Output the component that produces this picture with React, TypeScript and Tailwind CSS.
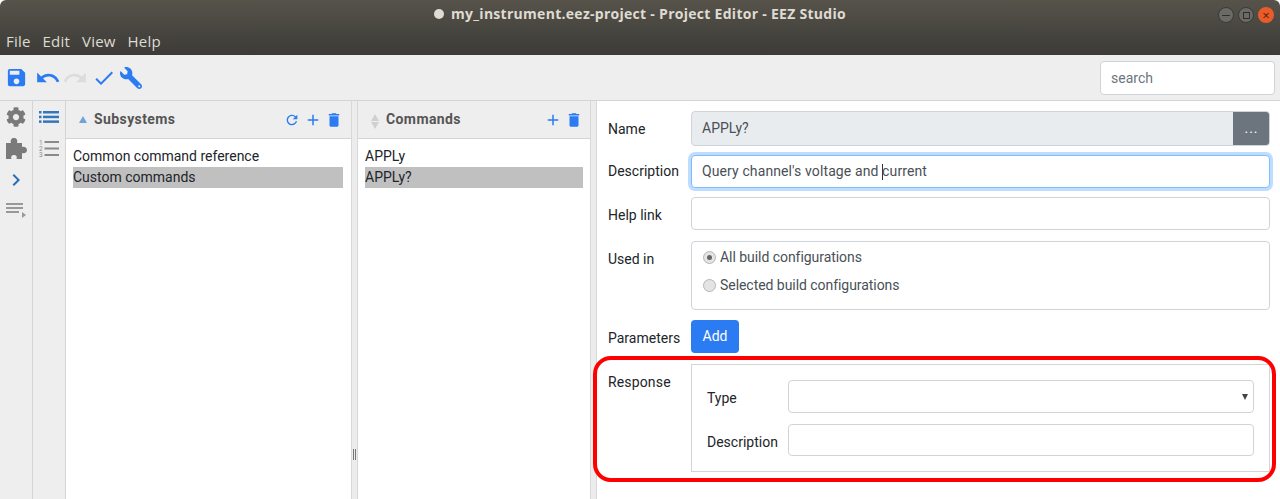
import { FaCog, FaWrench } from 'react-icons/fa';
import { MdSave, MdUndo, MdRedo, MdRefresh, MdAdd, MdDelete, MdCheck, MdChevronRight } from 'react-icons/md';

const ICON_BLUE = 'text-[#2b7bf3]';

function Splitter({ grip = false }: { grip?: boolean }) {
    return (
        <div className="w-[7px] shrink-0 bg-[#ececec] border-x border-[#d8d8d8] flex items-end justify-center pb-[39px]">
            {grip && <div className="w-[3px] h-[11px] border-x border-[#777]" />}
        </div>
    );
}

function PanelHeader({ title, sort, refresh }: { title: string; sort: 'up' | 'none'; refresh?: boolean }) {
    return (
        <div className={`h-[38px] shrink-0 bg-[#eeeeee] border-b border-[#d4d4d4] flex items-center pl-[13px] ${refresh ? 'pr-[8px]' : 'pr-[7px]'}`}>
            {sort === 'up' ? (
                <div className="w-0 h-0 border-x-[4px] border-x-transparent border-b-[7px] border-b-[#6fa4d8] mr-[7px]" />
            ) : (
                <div className="flex flex-col gap-[1px] mr-[7px] mt-[3px]">
                    <div className="w-0 h-0 border-x-[4px] border-x-transparent border-b-[7px] border-b-[#d0d0d0]" />
                    <div className="w-0 h-0 border-x-[4px] border-x-transparent border-t-[7px] border-t-[#d0d0d0]" />
                </div>
            )}
            <span className="text-[14px] font-bold text-[#555] tracking-[0.4px] -mt-[1px]">{title}</span>
            <div className={`ml-auto flex items-center gap-[3px] ${ICON_BLUE}`}>
                {refresh && <MdRefresh size={16} className="mr-[1px]" />}
                <MdAdd size={18} />
                <MdDelete size={18} />
            </div>
        </div>
    );
}

function Row({ text, selected }: { text: string; selected?: boolean }) {
    return (
        <div className={`h-[21px] leading-[21px] text-[14px] text-[#212529] ${selected ? 'bg-[#c0c0c0]' : ''}`}>
            {text}
        </div>
    );
}

function Radio({ checked, label }: { checked?: boolean; label: string }) {
    return (
        <div className="flex items-center h-[28px] text-[14px] tracking-[-0.05px] text-[#495057]">
            <div className="w-[13px] h-[13px] rounded-full border border-[#b5b5b5] bg-[#e4e4e4] flex items-center justify-center ml-[11px] mr-[4px]">
                {checked && <div className="w-[5px] h-[5px] rounded-full bg-[#666]" />}
            </div>
            {label}
        </div>
    );
}

export default function App() {
    return (
        <div className="relative w-[1280px] h-[499px] overflow-hidden bg-white flex flex-col font-['Roboto',sans-serif]">
            {/* Title bar */}
            <div className="h-[55px] shrink-0 bg-gradient-to-b from-[#57534b] to-[#3c3b37] rounded-t-[6px] font-['Open_Sans',sans-serif]">
                <div className="h-[27px] relative flex items-center justify-center">
                    <div className="w-[10px] h-[10px] rounded-full bg-[#dfdbd2] mr-[7px]" />
                    <span className="text-[14px] font-bold tracking-[0.28px] text-[#dfdbd2]">my_instrument.eez-project - Project Editor - EEZ Studio</span>
                    <div className="absolute right-[6px] top-[7px] flex gap-[4px]">
                        <div className="w-[16px] h-[16px] rounded-full bg-[#6a6a66] border border-[#3a3a36] flex items-center justify-center">
                            <div className="w-[8px] h-[1px] bg-[#2e2e2a]" />
                        </div>
                        <div className="w-[16px] h-[16px] rounded-full bg-[#6a6a66] border border-[#3a3a36] flex items-center justify-center">
                            <div className="w-[7px] h-[7px] border border-[#2e2e2a]" />
                        </div>
                        <div className="w-[16px] h-[16px] rounded-full bg-[#e95c2a] flex items-center justify-center text-[#4a2010] text-[13px] leading-none">×</div>
                    </div>
                </div>
                <div className="h-[28px] flex items-center gap-[12px] pl-[6px] text-[15px] tracking-[0.2px] text-[#dfdbd2]">
                    <span>File</span>
                    <span>Edit</span>
                    <span>View</span>
                    <span>Help</span>
                </div>
            </div>

            {/* Toolbar */}
            <div className="h-[46px] shrink-0 bg-[#eeeeee] border-b border-[#d4d4d4] flex items-center pl-[5px] pr-[5px]">
                <MdSave size={23} className={ICON_BLUE} />
                <MdUndo size={26} className={`${ICON_BLUE} ml-[7px]`} />
                <MdRedo size={26} className="text-[#dcdcdc] ml-[1px]" />
                <MdCheck size={24} className={`${ICON_BLUE} ml-[4px]`} />
                <FaWrench size={22} className={`${ICON_BLUE} ml-[4px] -scale-x-100`} />
                <div className="ml-auto w-[175px] h-[34px] bg-white border border-[#ced4da] rounded-[4px] flex items-center px-[10px] pt-[1px] text-[14px] text-[#6c757d]">search</div>
            </div>

            <div className="flex flex-1 min-h-0">
                {/* Icon rails */}
                <div className="w-[33px] shrink-0 bg-[#eeeeee] border-r border-[#d4d4d4] flex flex-col items-center text-[#7a7a7a]">
                    <FaCog size={20} className="mt-[6px]" />
                    <svg width="22" height="22" viewBox="0 0 22 22" fill="currentColor" className="mt-[11px]">
                        <path d="M1 5H6C5 2 6.500 0 9 0C11.500 0 13 2 12 5H17V9C19.500 8 22 9.500 22 12C22 14.500 19.500 16 17 15V21H11.500C12.500 18.500 11 17 9 17C7 17 5.500 18.500 6.500 21H1V5Z" />
                    </svg>
                    <MdChevronRight size={24} className="text-[#2a6db5] mt-[8px]" />
                    <div className="relative mt-[11px] w-[20px] h-[14px] flex flex-col gap-[2px]">
                        <div className="h-[2px] w-[17px] bg-[#999]" />
                        <div className="h-[2px] w-[17px] bg-[#999]" />
                        <div className="h-[2px] w-[13px] bg-[#999]" />
                        <div className="absolute right-0 bottom-[-1px] w-0 h-0 border-y-[3px] border-y-transparent border-l-[4px] border-l-[#999]" />
                    </div>
                </div>
                <div className="w-[33px] shrink-0 bg-[#eeeeee] border-r border-[#d4d4d4] flex flex-col items-center">
                    <svg width="20" height="12" viewBox="0 0 20 12" className="text-[#3377bb] mt-[10px]" fill="currentColor">
                        <rect x="0" y="0" width="2.5" height="2.5" />
                        <rect x="4" y="0" width="16" height="2.5" />
                        <rect x="0" y="4.7" width="2.5" height="2.5" />
                        <rect x="4" y="4.7" width="16" height="2.5" />
                        <rect x="0" y="9.4" width="2.5" height="2.5" />
                        <rect x="4" y="9.4" width="16" height="2.5" />
                    </svg>
                    <svg width="20" height="22" viewBox="0 0 20 22" className="text-[#8a8a8a] mt-[17px] overflow-visible" fill="currentColor">
                        <rect x="5.500" y="1" width="14.500" height="2" />
                        <rect x="5.500" y="7.500" width="14.500" height="2" />
                        <rect x="5.500" y="14" width="14.500" height="2" />
                        <text x="0" y="5" fontSize="6.500" fontFamily="Roboto, sans-serif">1</text>
                        <text x="0" y="11" fontSize="6.500" fontFamily="Roboto, sans-serif">2</text>
                        <text x="0" y="17" fontSize="6.500" fontFamily="Roboto, sans-serif">3</text>
                    </svg>
                </div>

                {/* Subsystems */}
                <div className="w-[285px] shrink-0 flex flex-col">
                    <PanelHeader title="Subsystems" sort="up" refresh />
                    <div className="pt-[7px] pl-[7px] pr-[8px]">
                        <Row text="Common command reference" />
                        <Row text="Custom commands" selected />
                    </div>
                </div>
                <Splitter grip />

                {/* Commands */}
                <div className="w-[232px] shrink-0 flex flex-col">
                    <PanelHeader title="Commands" sort="none" />
                    <div className="pt-[7px] pl-[7px] pr-[7px]">
                        <Row text="APPLy" />
                        <Row text="APPLy?" selected />
                    </div>
                </div>
                <Splitter />

                {/* Properties */}
                <div className="flex-1 pt-[10px] pl-[11px] pr-[10px] text-[14px] text-[#212529]">
                    <div className="flex items-center h-[35px]">
                        <div className="w-[83px] pt-[2px]">Name</div>
                        <div className="flex-1 h-[35px] flex rounded-[4px] overflow-hidden border border-[#ced4da] bg-[#e9ecef]">
                            <div className="flex-1 flex items-center px-[10px] text-[#495057]">APPLy?</div>
                            <div className="w-[37px] -my-[1px] -mr-[1px] bg-[#6c757d] text-white flex items-center justify-center tracking-[1px]">...</div>
                        </div>
                    </div>
                    <div className="flex items-center h-[33px] mt-[9px]">
                        <div className="w-[83px]">Description</div>
                        <div className="flex-1 h-[33px] rounded-[4px] border border-[#80bdff] shadow-[0_0_0_3px_rgba(0,123,255,0.25)] bg-white flex items-center px-[10px] text-[#495057] tracking-[0.11px] whitespace-pre">
                            Query channel's voltage and <span className="inline-block w-px h-[16px] -mr-px bg-[#333]" />current
                        </div>
                    </div>
                    <div className="flex items-center h-[33px] mt-[9px]">
                        <div className="w-[83px] pt-[4px]">Help link</div>
                        <div className="flex-1 h-[33px] rounded-[4px] border border-[#ced4da] bg-white" />
                    </div>
                    <div className="flex mt-[11px]">
                        <div className="w-[83px] pt-[8px]">Used in</div>
                        <div className="flex-1 h-[69px] rounded-[4px] border border-[#ced4da] pt-[1px]">
                            <Radio checked label="All build configurations" />
                            <Radio label="Selected build configurations" />
                        </div>
                    </div>
                    <div className="flex items-center mt-[10px]">
                        <div className="w-[83px] pt-[4px]">Parameters</div>
                        <div className="w-[48px] h-[33px] rounded-[4px] bg-[#2b7bf3] text-white flex items-center justify-center">Add</div>
                    </div>
                    <div className="flex mt-[11px]">
                        <div className="w-[83px] pt-[8px] tracking-[0.15px]">Response</div>
                        <div className="flex-1 h-[108px] border border-[#d4d4d4] pt-[15px] px-[15px]">
                            <div className="flex items-center h-[33px]">
                                <div className="w-[81px] pt-[4px]">Type</div>
                                <div className="flex-1 h-[33px] rounded-[4px] border border-[#ced4da] flex items-center justify-end pr-[5px]">
                                    <div className="w-0 h-0 border-x-[3px] border-x-transparent border-t-[6px] border-t-[#444]" />
                                </div>
                            </div>
                            <div className="flex items-center h-[32px] mt-[11px]">
                                <div className="w-[81px] pt-[4px]">Description</div>
                                <div className="flex-1 h-[32px] rounded-[4px] border border-[#ced4da]" />
                            </div>
                        </div>
                    </div>
                </div>
            </div>

            {/* Red highlight drawn over the screenshot */}
            <div className="absolute left-[593px] top-[356px] w-[683px] h-[126px] border-[4px] border-[#ff0000] rounded-[18px] pointer-events-none" />
        </div>
    );
}
